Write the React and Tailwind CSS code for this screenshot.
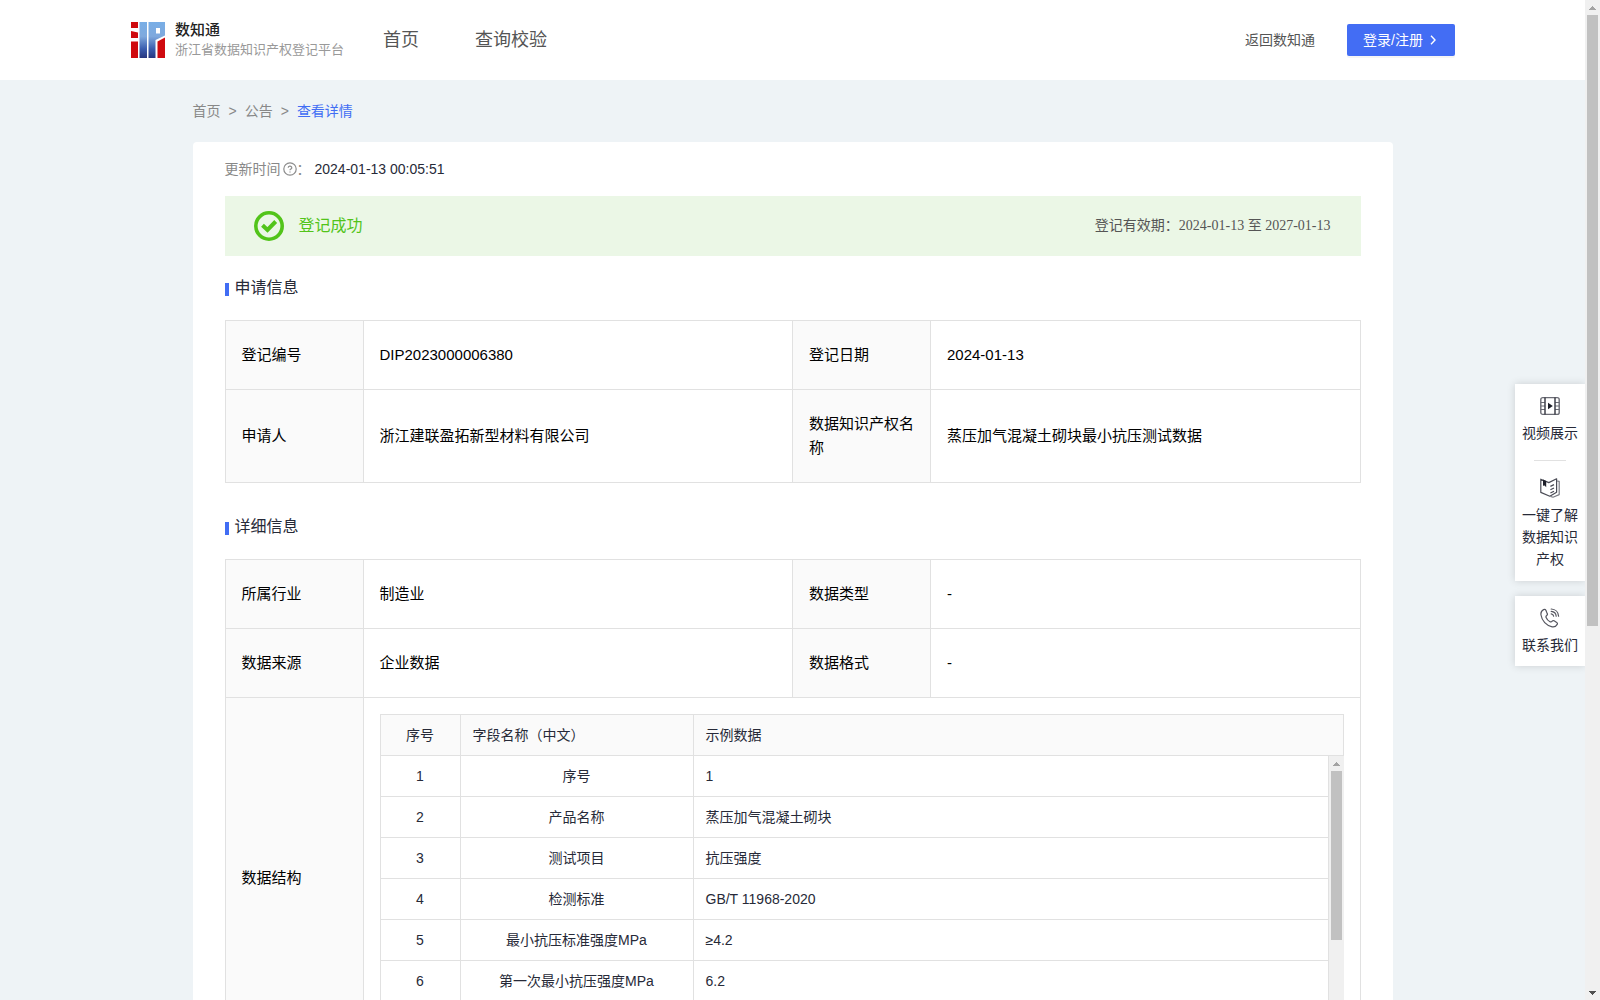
import React from "react";

const applyRows = [
  ["登记编号", "DIP2023000006380", "登记日期", "2024-01-13"],
  ["申请人", "浙江建联盈拓新型材料有限公司", "数据知识产权名称", "蒸压加气混凝土砌块最小抗压测试数据"],
];

const detailRows = [
  ["所属行业", "制造业", "数据类型", "-"],
  ["数据来源", "企业数据", "数据格式", "-"],
];

const fields = [
  ["序号", "1"],
  ["产品名称", "蒸压加气混凝土砌块"],
  ["测试项目", "抗压强度"],
  ["检测标准", "GB/T 11968-2020"],
  ["最小抗压标准强度MPa", "≥4.2"],
  ["第一次最小抗压强度MPa", "6.2"],
];

const Logo = () => (
  <svg width="34" height="36" viewBox="0 0 34 36" aria-hidden="true">
    <defs>
      <linearGradient id="logoBlue" gradientUnits="userSpaceOnUse" x1="0" y1="0" x2="0" y2="36">
        <stop offset="0" stopColor="#78aee6" />
        <stop offset="0.4" stopColor="#7fa9dd" />
        <stop offset="0.75" stopColor="#3a5cae" />
        <stop offset="1" stopColor="#27367f" />
      </linearGradient>
    </defs>
    <path fill="#cf0a0f" d="M0 0h7v6H0zM0 9l7 1.500V16H0zM0 19.500h7V36H0z" />
    <path fill="url(#logoBlue)" d="M8.500 0h7.500v36H8.500z" />
    <path fill="url(#logoBlue)" fillRule="evenodd" d="M17.500 0H34v13.500l-9.500 4.500v18h-7zM25 6v5.500h4V6z" />
    <path fill="#cf0a0f" d="M26.500 19.500L34 15.500V36h-7.500z" />
  </svg>
);

const CheckIcon = () => (
  <svg width="30" height="30" viewBox="0 0 30 30" fill="none" stroke="#52c41a" aria-hidden="true">
    <circle cx="15" cy="15" r="13.2" strokeWidth="3.6" />
    <path d="M8.500 14.200l5 4.800 8.200-8.500" strokeWidth="4" />
  </svg>
);

const QuestionIcon = () => (
  <svg width="14" height="14" viewBox="0 0 14 14" fill="none" stroke="#8c8c8c" strokeWidth="1.2" aria-hidden="true">
    <circle cx="7" cy="7" r="6.2" />
    <path d="M5.2 5.7a1.8 1.6 0 1 1 2.6 1.4c-.5.3-.8.6-.8 1.2" />
    <path d="M7 9.4v1.2" />
  </svg>
);

const VideoIcon = () => (
  <svg width="20" height="20" viewBox="0 0 20 20" fill="none" stroke="#6b6c75" strokeWidth="1.4" aria-hidden="true">
    <rect x="0.8" y="1.6" width="18.4" height="16.8" rx="2" />
    <path d="M.8 6.500h4M.8 13.500h4M15.200 6.500h4M15.200 13.500h4M.8 10h4M15.200 10h4" strokeWidth="1.1" />
    <path d="M5 1.600v16.800M15 1.600v16.800" stroke="#33353f" />
    <path d="M8 6.800l4.800 3.200L8 13.200z" fill="#1d1f29" stroke="none" />
  </svg>
);

const BookIcon = () => (
  <svg width="20" height="20" viewBox="0 0 20 20" fill="none" stroke="#4a4b55" strokeWidth="1.2" strokeLinejoin="round" aria-hidden="true">
    <path d="M.8 1.200l8 3.400L16.600.8v13.400l-6.800 4-9-3.800z" />
    <path d="M17 3l2.200.4v13.200l-6.200 2.600-2.600-.8" stroke="#7c7d85" />
    <path d="M3 1.600l3.200 1.400v6.200L4.600 7.400 3 7.800z" fill="#1d1f29" stroke="none" />
    <path d="M10.400 8.400l3.600-1.800M10.400 11.800l3.600-1.800M10.400 15l3.600-1.800" />
  </svg>
);

const PhoneIcon = () => (
  <svg width="20" height="20" viewBox="0 0 20 20" fill="none" stroke="#55565f" strokeWidth="1.2" strokeLinecap="round" strokeLinejoin="round" aria-hidden="true">
    <path d="M3.600 1.600C1.400 2.800.6 4.600 1 7c.8 5.600 5.400 10.600 11.200 11.800 2.400.4 4-.6 5-2.400.4-.8.2-1.600-.5-2l-2.600-1.600c-.7-.4-1.400-.3-1.900.3-.6.8-1.300 1.100-2.200.6-1.900-1-3.100-2.400-3.900-4.300-.4-.9-.1-1.500.6-2 .7-.4.900-1.100.5-1.800L5.900 2.200c-.5-.9-1.400-1.100-2.300-.6z" />
    <path d="M11.200 1c4.200.2 7.200 3.200 7.400 7.200M11.200 3.400c2.800.2 4.800 2.200 5 4.800M11.200 5.800c1.400.2 2.200 1 2.400 2.400" />
  </svg>
);

const SectionTitle = ({ children }) => (
  <h2 className="flex items-center gap-[6px] text-base leading-6 text-[#272a38]">
    <span className="mt-[3px] h-[13px] w-1 bg-[#416df4]" />
    {children}
  </h2>
);

const InfoRow = ({ row }) => (
  <tr>
    {row.map((text, i) =>
      i % 2 === 0 ? (
        <th key={i} scope="row" className="border border-[#e1e1e1] bg-[#fafafa] px-4 py-[22px] text-left font-normal">
          {text}
        </th>
      ) : (
        <td key={i} className="border border-[#e1e1e1] px-4 py-[22px]">
          {text}
        </td>
      )
    )}
  </tr>
);

const InfoTable = ({ rows, children }) => (
  <table className="w-full table-fixed border-collapse text-[15px] leading-6 text-black">
    <colgroup>
      <col className="w-[138px]" />
      <col />
      <col className="w-[138px]" />
      <col />
    </colgroup>
    <tbody>
      {rows.map((row) => (
        <InfoRow key={row[0]} row={row} />
      ))}
      {children}
    </tbody>
  </table>
);

const Arrow = ({ down, color }) => (
  <svg width="7" height="4" viewBox="0 0 7 4" fill={color} shapeRendering="crispEdges" aria-hidden="true">
    <path d={down ? "M0 0h7v1H6v1H5v1H4v1H3V3H2V2H1V1H0z" : "M0 4h7V3H6V2H5V1H4V0H3v1H2v1H1v1H0z"} />
  </svg>
);

// thumb takes its share of the track from the class passed in
const ScrollBar = ({ thumb }) => (
  <div className="flex w-[15px] shrink-0 flex-col items-center bg-[#f0f0f0]" aria-hidden="true">
    <div className="flex h-[15px] items-center">
      <Arrow color="#a3a3a3" />
    </div>
    <div className="flex w-full flex-1 justify-center">
      <div className={`w-[11px] bg-[#c1c1c1] ${thumb}`} />
    </div>
    <div className="flex h-[15px] items-center">
      <Arrow down color="#505050" />
    </div>
  </div>
);

const FieldCols = () => (
  <colgroup>
    <col className="w-20" />
    <col className="w-[233px]" />
    <col />
  </colgroup>
);

const FieldTable = () => (
  <div className="text-sm leading-5 text-[#272a38]">
    <table className="w-full table-fixed border-collapse">
      <FieldCols />
      <thead>
        <tr className="bg-[#fafafa]">
          <th className="border border-[#e1e1e1] px-3 py-[10px] text-center font-normal">序号</th>
          <th className="border border-[#e1e1e1] px-3 py-[10px] text-left font-normal">字段名称（中文）</th>
          <th className="border border-[#e1e1e1] px-3 py-[10px] text-left font-normal">示例数据</th>
        </tr>
      </thead>
    </table>
    <div className="flex h-[286px] overflow-hidden">
      <div className="min-w-0 flex-1">
        <table className="w-full table-fixed border-collapse">
          <FieldCols />
          <tbody>
            {fields.map(([name, sample], i) => (
              <tr key={name}>
                <td className="border border-t-0 border-[#e1e1e1] px-3 py-[10px] text-center">{i + 1}</td>
                <td className="border border-t-0 border-[#e1e1e1] px-3 py-[10px] text-center">{name}</td>
                <td className="border border-t-0 border-[#e1e1e1] px-3 py-[10px]">{sample}</td>
              </tr>
            ))}
          </tbody>
        </table>
      </div>
      <ScrollBar thumb="h-[66%]" />
    </div>
  </div>
);

const SideLink = ({ icon, children }) => (
  <a href="#" className="flex flex-col items-center gap-[6px] text-center">
    {icon}
    <span>{children}</span>
  </a>
);

export default function App() {
  return (
    <div className="flex h-screen overflow-hidden bg-[#eef3f6] font-['Liberation_Sans','Noto_Sans_CJK_SC',sans-serif] text-sm">
      <div className="relative min-w-0 flex-1 overflow-hidden">
        <header className="flex h-20 items-center bg-white pl-[131px] pr-[130px] text-[#555]">
          <a href="#" className="flex items-center gap-[10px]">
            <Logo />
            <span className="flex w-[164px] flex-col whitespace-nowrap">
              <span className="text-[15px] font-medium leading-5 text-[#222]">数知通</span>
              <span className="text-[13px] leading-5 text-[#999]">浙江省数据知识产权登记平台</span>
            </span>
          </a>
          <nav className="ml-11 flex flex-1 gap-14 text-lg">
            <a href="#">首页</a>
            <a href="#">查询校验</a>
          </nav>
          <a href="#" className="mr-8">返回数知通</a>
          <button type="button" className="flex h-8 w-[108px] items-center gap-1 rounded-xs bg-[#436df4] pl-4 text-white shadow-[0_2px_0_rgba(0,0,0,0.04)]">
            登录/注册
            <svg width="12" height="12" viewBox="0 0 12 12" fill="none" stroke="currentColor" strokeWidth="1.4" aria-hidden="true">
              <path d="M4 1.800l4 4.200-4 4.200" />
            </svg>
          </button>
        </header>

        <main className="mx-auto max-w-[1200px]">
          <nav className="flex h-[62px] items-center gap-2 text-[#888]">
            <a href="#">首页</a>
            <span>&gt;</span>
            <a href="#">公告</a>
            <span>&gt;</span>
            <a href="#" className="text-[#416df4]">查看详情</a>
          </nav>

          <div className="rounded bg-white px-8 pb-8 pt-4">
            <div className="flex h-[22px] items-center text-[#272a38]">
              <span className="mr-[2px] text-[#888]">更新时间</span>
              <QuestionIcon />
              <span className="mr-1 text-[#888]">：</span>
              2024-01-13 00:05:51
            </div>

            <div className="mt-4 flex h-[60px] items-center bg-[#ebf7e6] pl-[29px] pr-[30px]">
              <CheckIcon />
              <span className="ml-[15px] flex-1 text-base text-[#52c41a]">登记成功</span>
              <span className="font-['Liberation_Serif','Noto_Sans_CJK_SC',serif] text-[#555]">
                登记有效期：2024-01-13 至 2027-01-13
              </span>
            </div>

            <div className="mb-5 mt-5">
              <SectionTitle>申请信息</SectionTitle>
            </div>
            <InfoTable rows={applyRows} />

            <div className="mb-5 mt-8">
              <SectionTitle>详细信息</SectionTitle>
            </div>
            <InfoTable rows={detailRows}>
              <tr>
                <th scope="row" className="border border-[#e1e1e1] bg-[#fafafa] px-4 text-left font-normal">
                  数据结构
                </th>
                <td colSpan={3} className="border border-[#e1e1e1] p-4">
                  <FieldTable />
                </td>
              </tr>
            </InfoTable>
          </div>
        </main>

        <aside className="absolute right-0 top-[384px] flex w-[70px] flex-col gap-[15px] leading-[22px] text-[#272a38]">
          <div className="flex flex-col items-center bg-white px-[7px] pb-[11px] pt-3 shadow-[0_0_8px_rgba(0,0,0,0.15)]">
            <SideLink icon={<VideoIcon />}>视频展示</SideLink>
            <hr className="mb-[17px] mt-4 w-8 border-[#e1e1e1]" />
            <SideLink icon={<BookIcon />}>一键了解数据知识产权</SideLink>
          </div>
          <div className="flex flex-col items-center bg-white px-[7px] pb-[10px] pt-3 shadow-[0_0_8px_rgba(0,0,0,0.15)]">
            <SideLink icon={<PhoneIcon />}>联系我们</SideLink>
          </div>
        </aside>
      </div>
      <ScrollBar thumb="h-[63%]" />
    </div>
  );
}
